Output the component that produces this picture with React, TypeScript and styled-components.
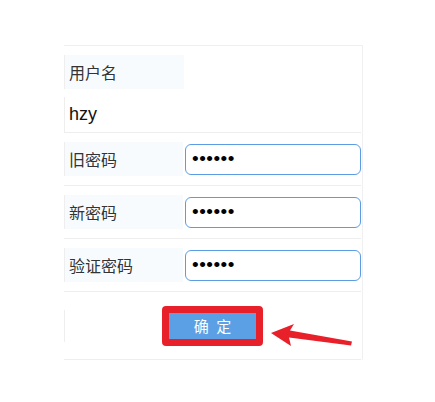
import React from 'react';
import styled, { createGlobalStyle } from 'styled-components';

const GlobalStyle = createGlobalStyle`
  html, body {
    margin: 0;
    padding: 0;
    background: #fff;
  }
  body {
    font-family: "Noto Sans CJK SC", "Noto Sans", sans-serif;
    color: #333;
  }
`;

const FIELDS = [
  { label: '旧密码', value: '123456' },
  { label: '新密码', value: '123456' },
  { label: '验证密码', value: '123456' },
];

export default function App() {
  return (
    <Page>
      <GlobalStyle />
      <Card>
        <FirstRow>
          <LabelCell>用户名</LabelCell>
          <ValueCell>hzy</ValueCell>
        </FirstRow>
        {FIELDS.map((f) => (
          <Row key={f.label}>
            <LabelCell>{f.label}</LabelCell>
            <PwdInput type="password" defaultValue={f.value} readOnly />
          </Row>
        ))}
        <ButtonRow>
          <EmptyCell />
          <Highlight>
            <SubmitButton>确 定</SubmitButton>
          </Highlight>
          <div />
        </ButtonRow>
      </Card>
      <Arrow width="86" height="28" viewBox="0 0 86 28">
        <polygon points="1,11 24,2 20,8.5 82,19.5 81,23.5 19,15.5 21,24" fill="#e8202a" />
      </Arrow>
    </Page>
  );
}

const Page = styled.div`
  position: relative;
  width: 435px;
  height: 402px;
  padding: 45px 0 0 64px;
  box-sizing: border-box;
`;

const Card = styled.div`
  width: 299px;
  border-top: 1px solid #f0f0f0;
  border-right: 1px solid #f0f0f0;
  box-sizing: border-box;
`;

const RowBase = styled.div`
  margin-right: 1px;
  border-bottom: 1px solid #eeeeee;
`;

const FirstRow = styled(RowBase)`
  display: flex;
  flex-direction: column;
  align-items: flex-start;
  padding-top: 9px;
  gap: 8px;
`;

const Row = styled(RowBase)`
  display: flex;
  align-items: center;
  gap: 2px;
  padding: 9px 0;
`;

const LabelCell = styled.div`
  width: 115px;
  height: 34px;
  line-height: 34px;
  padding-left: 4px;
  background: #f8fbfe;
  border-left: 1px solid #eeeeee;
  font-size: 16px;
  color: #333;
  white-space: nowrap;
`;

const ValueCell = styled.div`
  align-self: stretch;
  height: 35px;
  line-height: 35px;
  padding-left: 4px;
  border-left: 1px solid #eeeeee;
  font-family: "Liberation Sans", Arial, sans-serif;
  font-size: 18px;
  color: #111;
`;

const PwdInput = styled.input`
  width: 176px;
  height: 31px;
  box-sizing: border-box;
  border: 1px solid #5b9ce2;
  border-radius: 6px;
  padding: 0 6px;
  font-family: "Liberation Sans", Arial, sans-serif;
  font-size: 19px;
  letter-spacing: 0.5px;
  color: #000;
  outline: none;
  background: #fff;
`;

const ButtonRow = styled(RowBase)`
  display: grid;
  grid-template-columns: 1fr auto 1fr;
  align-items: center;
  height: 67px;
`;

const EmptyCell = styled.div`
  height: 32px;
  border-left: 1px solid #eeeeee;
`;

const Highlight = styled.div`
  display: flex;
  border: 7px solid #e8202a;
  border-radius: 4px;
`;

const SubmitButton = styled.button`
  width: 87px;
  height: 26px;
  border: none;
  background: #5b9fe4;
  color: #fff;
  font-family: "Noto Sans CJK SC", sans-serif;
  font-size: 15px;
  letter-spacing: 2px;
  padding: 0 0 0 2px;
  line-height: 26px;
`;

const Arrow = styled.svg`
  position: absolute;
  left: 270px;
  top: 322px;
`;
